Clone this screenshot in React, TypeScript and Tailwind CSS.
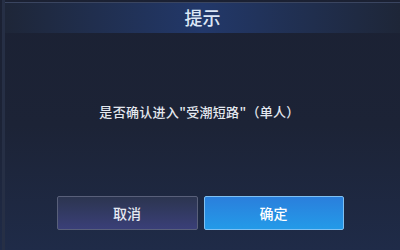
import React from 'react';

const cjk = { fontFamily: '"Noto Sans CJK SC", "Noto Sans", sans-serif' };

export default function App() {
  return (
    <div
      className="w-[400px] h-[250px] overflow-hidden bg-gradient-to-b from-[#1b2133] via-[#1c2336] to-[#1f2b48] flex flex-col"
      style={cjk}
    >
      <div className="flex flex-1 flex-col border-l-[3px] border-[#262f45] ml-[2px]">
        {/* header */}
        <div className="h-[31px] border-t border-[#3a4560] mt-[2px] bg-gradient-to-r from-[#1e2638] via-[#22386a] to-[#1e2638] flex items-center justify-center">
          <span className="text-[18px] font-medium text-[#dbe6f5] leading-none -mt-[3px]">提示</span>
        </div>

        {/* message */}
        <div className="flex flex-1 items-center justify-center pb-[10px]">
          <p className="text-[13px] font-medium text-[#e4e8ef] tracking-[0.3px] mt-[5px] -ml-[6px]">是否确认进入"受潮短路"（单人）</p>
        </div>

        {/* buttons */}
        <div className="flex justify-center gap-[6px] pb-[20px] pr-[5px]">
          <button className="w-[141px] h-[34px] rounded-[2px] border border-[#59607a] bg-gradient-to-b from-[#2c3550] to-[#3a3f78] text-[14px] font-medium text-[#e6e9f2]">
            取消
          </button>
          <button className="w-[140px] h-[34px] rounded-[2px] border border-[#7fc0f2] bg-gradient-to-b from-[#2a7fdc] to-[#239ae8] text-[14px] font-medium text-white">
            确定
          </button>
        </div>
      </div>
    </div>
  );
}
